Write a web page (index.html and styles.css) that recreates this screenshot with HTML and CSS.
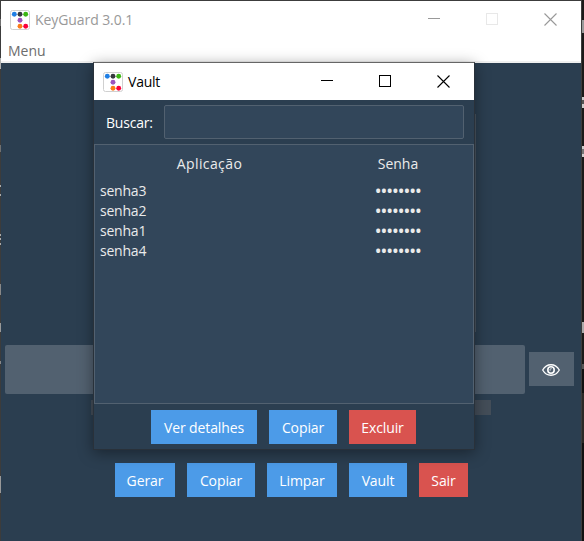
FILE: index.html
```html
<!DOCTYPE html>
<html lang="pt">
<head>
<meta charset="utf-8">
<title>KeyGuard 3.0.1</title>
<link rel="stylesheet" href="styles.css">
</head>
<body>
<svg class="defs" width="0" height="0" aria-hidden="true">
  <symbol id="logo" viewBox="0 0 20 20">
    <rect x=".5" y=".5" width="19" height="19" rx="2" fill="#fff" stroke="#d0d0d0"/>
    <circle cx="4.3" cy="4.2" r="2.45" fill="#1f7fe5"/>
    <circle cx="10" cy="4.2" r="2.45" fill="#36393d"/>
    <circle cx="15.7" cy="4.2" r="2.45" fill="#3cb714"/>
    <circle cx="10" cy="10.2" r="2.45" fill="#9b52bd"/>
    <circle cx="10" cy="16.2" r="2.45" fill="#fc7a18"/>
    <circle cx="15.7" cy="16.2" r="2.45" fill="#fb0039"/>
  </symbol>
  <symbol id="min" viewBox="0 0 12 12"><path d="M0 5.5h12" stroke="currentColor"/></symbol>
  <symbol id="max" viewBox="0 0 12 12"><rect x=".5" y=".5" width="11" height="11" fill="none" stroke="currentColor"/></symbol>
  <symbol id="close" viewBox="0 0 13 13"><path d="M.5.5l12 12M12.500.5L.5 12.500" stroke="currentColor" stroke-width="1.1"/></symbol>
</svg>
<div class="desktop">
  <div class="edge-left"></div>
  <main class="window">
    <header class="titlebar">
      <svg class="logo"><use href="#logo"/></svg>
      <span class="title">KeyGuard 3.0.1</span>
      <div class="controls">
        <svg><use href="#min"/></svg>
        <svg class="disabled"><use href="#max"/></svg>
        <svg class="close"><use href="#close"/></svg>
      </div>
    </header>
    <nav class="menubar"><span>Menu</span></nav>
    <section class="content">
      <div class="options"></div>
      <div class="password-row">
        <div class="password"></div>
        <button class="eye">
          <svg width="18" height="12" viewBox="0 0 18 12" fill="none" stroke="#fff">
            <path d="M.7 6C4.600-1 13.400-1 17.300 6C13.400 13 4.600 13 .7 6Z" stroke-width="1.300"/>
            <circle cx="9" cy="6" r="3.200" stroke-width="1.600"/>
            <path d="M8.200 6.700a1.300 1.300 0 0 1 1.500-2" stroke-width=".8"/>
          </svg>
        </button>
      </div>
      <div class="strength"></div>
      <div class="actions">
        <button class="btn gerar">Gerar</button>
        <button class="btn copiar">Copiar</button>
        <button class="btn limpar">Limpar</button>
        <button class="btn vault">Vault</button>
        <button class="btn danger sair">Sair</button>
      </div>
    </section>
  </main>
  <div class="edge-right"></div>
  <aside class="dialog">
    <header class="titlebar">
      <svg class="logo"><use href="#logo"/></svg>
      <span class="title">Vault</span>
      <div class="controls">
        <svg><use href="#min"/></svg>
        <svg><use href="#max"/></svg>
        <svg class="close"><use href="#close"/></svg>
      </div>
    </header>
    <div class="search"><label for="q">Buscar:</label><input id="q"></div>
    <div class="table">
      <div class="row head"><span>Aplicação</span><span>Senha</span></div>
      <div class="row"><span>senha3</span><span class="dots">••••••••</span></div>
      <div class="row"><span>senha2</span><span class="dots">••••••••</span></div>
      <div class="row"><span>senha1</span><span class="dots">••••••••</span></div>
      <div class="row"><span>senha4</span><span class="dots">••••••••</span></div>
    </div>
    <div class="dialog-actions">
      <button class="btn detalhes">Ver detalhes</button>
      <button class="btn copiar">Copiar</button>
      <button class="btn danger excluir">Excluir</button>
    </div>
  </aside>
</div>
</body>
</html>
```
FILE: styles.css
```css
* { box-sizing: border-box; }
body { margin: 0; font: 14px/20px "Open Sans", "Noto Sans", sans-serif; letter-spacing: -.22px; }
.defs { position: absolute; }
.desktop { position: relative; width: 584px; height: 541px; overflow: hidden; background: #1b1a19; display: flex; }
.edge-left { width: 1px; background: linear-gradient(#3c3c3c 19px, #707070 19px 26px, #3c3c3c 26px 58px, #b0b0b0 58px 69px, #3c3c3c 69px 145px, #707070 145px 152px, #3c3c3c 152px 185px, #aaa 185px 187px, #3c3c3c 187px 194px, #aaa 194px 196px, #3c3c3c 196px 234px, #aaa 234px 236px, #3c3c3c 236px 238px, #aaa 238px 240px, #3c3c3c 240px 243px, #aaa 243px 245px, #3c3c3c 245px 284px, #888 284px 295px, #3c3c3c 295px 323px, #999 323px 332px, #3c3c3c 332px 361px, #888 361px 364px, #3c3c3c 364px 476px, #999 476px 493px, #3c3c3c 493px); }
.edge-right { width: 2px; background: linear-gradient(#1b1a19 20px, #999 20px 33px, #1b1a19 33px 97px, #ccc 97px 100px, #555 100px 104px, #ccc 104px 108px, #1b1a19 108px 146px, #ccc 146px 149px, #777 149px 154px, #ccc 154px 157px, #1b1a19 157px 322px, #aaa 322px 333px, #1b1a19 333px 364px, #555 364px 369px, #111 369px 393px, #2b2926 393px 443px, #111 443px); }
.window { width: 581px; height: 541px; border: 1px solid #3c3c3c; border-bottom: 0; border-left: 0; background: #2b3e50; }
.titlebar { display: flex; align-items: center; background: #fff; height: 37px; color: #000; }
.window .titlebar { color: #999; padding-left: 9px; }
.logo { width: 20px; height: 20px; flex: none; }
.title { margin-left: 5px; }
.window .title { letter-spacing: -.08px; }
.controls { margin-left: auto; display: flex; gap: 46px; }
.controls svg { width: 12px; height: 12px; margin-top: -1px; }
.controls .close { width: 13px; height: 13px; }
.window .controls { padding-right: 24px; }
.controls .disabled { color: #e8e8e8; }
.menubar { height: 25px; background: #fff; border-bottom: 2px solid #f0f0f0; padding: 3px 7px 0; color: #6d6d6d; letter-spacing: 0; }
.content { padding-left: 4px; }
.options { width: 381px; height: 218px; margin: 51px 0 0 90px; border: 1px solid #4b5560; }
.password-row { display: flex; align-items: flex-start; gap: 4px; margin-top: 13px; }
.password { width: 520px; height: 49px; background: #526170; border-radius: 2px; }
.eye { width: 45px; height: 34px; margin-top: 7px; background: #526170; border: 0; padding: 2px 1px 0 0; display: grid; place-items: center; }
.strength { width: 400px; height: 15px; margin: 6px 0 0 86px; background: #444e59; }
.actions { display: flex; gap: 12px; margin: 48px 0 0 110px; }
.btn { height: 34px; border: 0; padding: 1px 0 0; background: #4c9be8; color: #fff; font: inherit; letter-spacing: -.1px; text-align: center; white-space: nowrap; }
.danger { background: #d9534f; }
.gerar { width: 60px; }
.copiar { width: 68px; }
.limpar { width: 70px; }
.vault { width: 58px; }
.sair { width: 49px; }
.dialog { position: absolute; left: 93px; top: 62px; width: 382px; height: 388px; border: 1px solid #29313a; border-top-color: #666; background: #2b3e50; color: #ebebeb; box-shadow: 0 3px 14px rgba(0, 0, 0, .4); }
.dialog .titlebar { padding: 0 24px 0 9px; }
.search { display: flex; align-items: center; padding: 5px 10px 5px 12px; }
.search label { width: 58px; color: #fff; padding-top: 1px; }
.search input { width: 300px; height: 34px; border: 1px solid #526170; border-radius: 2px; background: #32465a; color: #fff; }
.table { height: 260px; border: 1px solid #526170; background: #32465a; }
.row { display: grid; grid-template-columns: 229px 149px; height: 20px; line-height: 20px; }
.row > :first-child { padding-left: 5px; }
.row > :last-child { text-align: center; }
.head { height: 36px; line-height: 37px; }
.head > :first-child { padding: 0; text-align: center; letter-spacing: .4px; }
.head > :last-child { letter-spacing: 0; padding-right: 1px; }
.row > .dots { font-weight: 700; letter-spacing: .5px; }
.dialog-actions { display: flex; justify-content: center; gap: 12px; padding: 6px 1px 0 0; }
.detalhes { width: 106px; }
.excluir { width: 67px; }
```
